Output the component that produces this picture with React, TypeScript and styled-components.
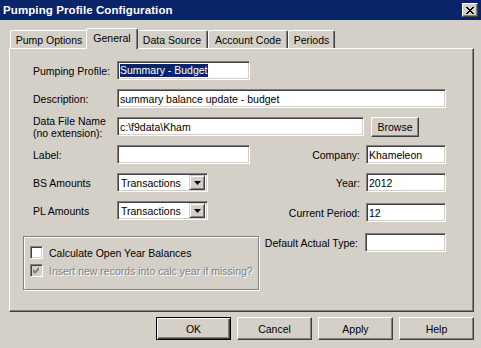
import React from "react";
import styled, { createGlobalStyle } from "styled-components";

const GlobalStyle = createGlobalStyle`
  html, body {
    margin: 0;
    padding: 0;
    background: #d4d0c8;
  }
  body {
    font-family: "Liberation Sans", Arial, sans-serif;
    font-size: 10.5px;
    color: #000;
  }
`;

function App() {
  return (
    <Window>
      <GlobalStyle />
      <TitleBar>
        <Title>Pumping Profile Configuration</Title>
        <CloseButton>
          <svg width="8" height="7" viewBox="0 0 8 7">
            <path
              d="M0 0h2v1H0zM6 0h2v1H6zM1 1h2v1H1zM5 1h2v1H5zM2 2h4v1H2zM3 3h2v1H3zM2 4h4v1H2zM1 5h2v1H1zM5 5h2v1H5zM0 6h2v1H0zM6 6h2v1H6z"
              fill="#000"
            />
          </svg>
        </CloseButton>
      </TitleBar>

      <Body>
        <TabStrip>
          <Tab $width={78}>Pump Options</Tab>
          <Tab $width={48} $active>
            General
          </Tab>
          <Tab $width={72}>Data Source</Tab>
          <Tab $width={80}>Account Code</Tab>
          <Tab $width={47}>Periods</Tab>
        </TabStrip>

        <Panel>
          <Form>
            <Row>
              <FieldLabel>Pumping Profile:</FieldLabel>
              <Field $width={133}>
                <Selection>Summary - Budget</Selection>
              </Field>
            </Row>
            <Row>
              <FieldLabel>Description:</FieldLabel>
              <Field $width={329}>summary balance update - budget</Field>
            </Row>
            <Row>
              <FieldLabel $twoLine>
                Data File Name
                <br />
                (no extension):
              </FieldLabel>
              <Field $width={247}>c:\f9data\Kham</Field>
              <Browse>Browse</Browse>
            </Row>
            <Row>
              <FieldLabel>Label:</FieldLabel>
              <Field $width={133} />
              <RightGroup>
                <span>Company:</span>
                <Field $width={80}>Khameleon</Field>
              </RightGroup>
            </Row>
            <Row>
              <FieldLabel>BS Amounts</FieldLabel>
              <Combo>
                <span>Transactions</span>
                <DropButton>
                  <svg width="7" height="4" viewBox="0 0 7 4">
                    <path d="M0 0h7L3.5 4z" fill="#000" />
                  </svg>
                </DropButton>
              </Combo>
              <RightGroup>
                <span>Year:</span>
                <Field $width={80}>2012</Field>
              </RightGroup>
            </Row>
            <Row>
              <FieldLabel>PL Amounts</FieldLabel>
              <Combo>
                <span>Transactions</span>
                <DropButton>
                  <svg width="7" height="4" viewBox="0 0 7 4">
                    <path d="M0 0h7L3.5 4z" fill="#000" />
                  </svg>
                </DropButton>
              </Combo>
              <RightGroup $raise={2}>
                <span>Current Period:</span>
                <Field $width={80}>12</Field>
              </RightGroup>
            </Row>

            <BottomRow>
              <GroupBox>
                <CheckRow>
                  <CheckBox />
                  <span>Calculate Open Year Balances</span>
                </CheckRow>
                <CheckRow>
                  <CheckBox $disabled>
                    <svg width="7" height="7" viewBox="0 0 7 7">
                      <path
                        d="M6 0v3L2 7 0 5V2l2 2z"
                        fill="#808080"
                      />
                    </svg>
                  </CheckBox>
                  <DisabledText>
                    Insert new records into calc year if missing?
                  </DisabledText>
                </CheckRow>
              </GroupBox>
              <DefaultGroup>
                <span>Default Actual Type:</span>
                <Field $width={81} />
              </DefaultGroup>
            </BottomRow>
          </Form>
        </Panel>

        <ButtonRow>
          <DialogButton $default>OK</DialogButton>
          <DialogButton>Cancel</DialogButton>
          <DialogButton>Apply</DialogButton>
          <DialogButton>Help</DialogButton>
        </ButtonRow>
      </Body>
    </Window>
  );
}

const Window = styled.div`
  width: 481px;
  height: 348px;
  display: flex;
  flex-direction: column;
  background: #d4d0c8;
  overflow: hidden;
`;

const TitleBar = styled.div`
  height: 20px;
  flex-shrink: 0;
  background: #0a246a;
  display: flex;
  align-items: center;
  justify-content: space-between;
  padding: 0 3px 0 3px;
`;

const Title = styled.span`
  color: #fff;
  font-weight: bold;
  font-size: 11.5px;
  letter-spacing: 0.1px;
`;

const CloseButton = styled.div`
  width: 16px;
  height: 14px;
  box-sizing: border-box;
  background: #d4d0c8;
  border: 1px solid;
  border-color: #fff #404040 #404040 #fff;
  box-shadow: inset -1px -1px #808080;
  display: flex;
  align-items: center;
  justify-content: center;
`;

const Body = styled.div`
  display: flex;
  flex-direction: column;
  padding: 8px 7px 0 9px;
`;

const TabStrip = styled.div`
  display: flex;
  align-items: flex-end;
  height: 20px;
  padding-left: 1px;
`;

const Tab = styled.div<{ $width: number; $active?: boolean }>`
  width: ${(p) => p.$width + (p.$active ? 4 : 0)}px;
  height: ${(p) => (p.$active ? 21 : 18)}px;
  margin: ${(p) => (p.$active ? "0 -2px -1px -2px" : "0")};
  position: relative;
  z-index: ${(p) => (p.$active ? 1 : 0)};
  box-sizing: border-box;
  background: #d4d0c8;
  border-left: 1px solid #fff;
  border-top: 1px solid #fff;
  border-right: 1px solid #404040;
  border-radius: 2px 2px 0 0;
  box-shadow: inset -1px 0 #808080;
  display: flex;
  align-items: center;
  justify-content: center;
  padding-bottom: ${(p) => (p.$active ? 3 : 0)}px;
  white-space: nowrap;
`;

const Panel = styled.div`
  height: 264px;
  box-sizing: border-box;
  border: 1px solid;
  border-color: #fff #404040 #404040 #fff;
  box-shadow: inset -1px -1px #808080;
  padding: 12px 27px 0 13px;
`;

const Form = styled.div`
  display: flex;
  flex-direction: column;
  gap: 9px;
`;

const Row = styled.div`
  display: flex;
  align-items: center;
  height: 19px;
  padding-left: 10px;
`;

const FieldLabel = styled.div<{ $twoLine?: boolean }>`
  width: 84px;
  flex-shrink: 0;
  line-height: ${(p) => (p.$twoLine ? "12px" : "normal")};
  white-space: nowrap;
`;

const Field = styled.div<{ $width: number }>`
  width: ${(p) => p.$width}px;
  height: 19px;
  flex-shrink: 0;
  box-sizing: border-box;
  background: #fff;
  border: 1px solid;
  border-color: #808080 #fff #fff #808080;
  box-shadow: inset 1px 1px #404040, inset -1px -1px #d4d0c8;
  padding: 0 2px 0 2px;
  display: flex;
  align-items: center;
  white-space: nowrap;
  overflow: hidden;
`;

const Selection = styled.span`
  background: #0a246a;
  color: #fff;
  line-height: 13px;
`;

const Browse = styled.div`
  width: 48px;
  height: 20px;
  margin-left: 7px;
  box-sizing: border-box;
  background: #d4d0c8;
  border: 1px solid;
  border-color: #fff #404040 #404040 #fff;
  box-shadow: inset -1px -1px #808080;
  display: flex;
  align-items: center;
  justify-content: center;
`;

const RightGroup = styled.div<{ $raise?: number }>`
  margin-left: auto;
  display: flex;
  align-items: center;
  gap: 6px;
  margin-top: ${(p) => (p.$raise ? p.$raise * 2 : 0)}px;
`;

const Combo = styled.div`
  width: 91px;
  height: 19px;
  box-sizing: border-box;
  background: #fff;
  border: 1px solid;
  border-color: #808080 #fff #fff #808080;
  box-shadow: inset 1px 1px #404040, inset -1px -1px #d4d0c8;
  padding: 2px 2px 2px 3px;
  display: flex;
  align-items: center;
  justify-content: space-between;
`;

const DropButton = styled.div`
  width: 16px;
  height: 15px;
  box-sizing: border-box;
  background: #d4d0c8;
  border: 1px solid;
  border-color: #d4d0c8 #404040 #404040 #d4d0c8;
  box-shadow: inset 1px 1px #fff, inset -1px -1px #808080;
  display: flex;
  align-items: center;
  justify-content: center;
`;

const BottomRow = styled.div`
  display: flex;
  align-items: flex-start;
  margin-top: 4px;
`;

const GroupBox = styled.div`
  width: 236px;
  height: 54px;
  margin-top: 3px;
  box-sizing: border-box;
  border: 1px solid #808080;
  box-shadow: inset 1px 1px #fff, 1px 1px #fff;
  padding: 9px 0 0 6px;
  display: flex;
  flex-direction: column;
  gap: 5px;
`;

const CheckRow = styled.div`
  display: flex;
  align-items: center;
  gap: 6px;
  height: 13px;
  white-space: nowrap;
`;

const CheckBox = styled.div<{ $disabled?: boolean }>`
  width: 13px;
  height: 13px;
  flex-shrink: 0;
  box-sizing: border-box;
  background: ${(p) => (p.$disabled ? "#d4d0c8" : "#fff")};
  border: 1px solid;
  border-color: #808080 #fff #fff #808080;
  box-shadow: inset 1px 1px #404040, inset -1px -1px #d4d0c8;
  display: flex;
  align-items: center;
  justify-content: center;
`;

const DisabledText = styled.span`
  color: #808080;
  text-shadow: 1px 1px #fff;
`;

const DefaultGroup = styled.div`
  margin-left: auto;
  display: flex;
  align-items: center;
  gap: 7px;
`;

const ButtonRow = styled.div`
  display: flex;
  justify-content: flex-end;
  gap: 6px;
  margin-top: 5px;
`;

const DialogButton = styled.div<{ $default?: boolean }>`
  width: 75px;
  height: 23px;
  box-sizing: border-box;
  background: #d4d0c8;
  border: 1px solid;
  border-color: ${(p) =>
    p.$default ? "#000" : "#fff #404040 #404040 #fff"};
  box-shadow: ${(p) =>
    p.$default
      ? "inset 1px 1px #fff, inset -1px -1px #404040, inset -2px -2px #808080"
      : "inset -1px -1px #808080"};
  display: flex;
  align-items: center;
  justify-content: center;
`;

export default App;
